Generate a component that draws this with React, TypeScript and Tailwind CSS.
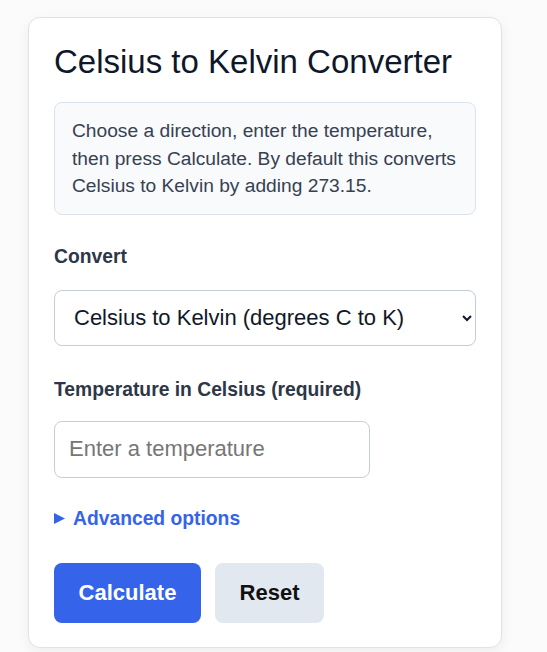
import { useState } from 'react';

export default function App() {
  const [direction, setDirection] = useState('c2k');
  const [value, setValue] = useState('');

  return (
    <div className="min-h-screen bg-[#fbfbfb] px-[28px] pt-[17px] font-['Liberation_Sans',Arial,sans-serif]">
      <div className="w-[474px] rounded-[12px] border border-[#dde3ea] bg-white px-[25px] pt-[25px] pb-[24px] shadow-[0_4px_14px_rgba(15,23,42,0.06)]">
        <h1 className="text-[33px] leading-[38px] text-[#0f172a]">Celsius to Kelvin Converter</h1>

        <div className="mt-[21px] rounded-[8px] border border-[#dde3ea] bg-[#f8fafc] pl-[17px] pr-[10px] py-[14px] text-[19.2px] leading-[27.5px] text-[#374151]">
          Choose a direction, enter the temperature, then press Calculate. By default this converts Celsius to Kelvin by adding 273.15.
        </div>

        <label htmlFor="dir" className="mt-[28px] block text-[19.3px] font-bold leading-[27px] text-[#2d3748]">
          Convert
        </label>
        <select
          id="dir"
          value={direction}
          onChange={(e) => setDirection(e.target.value)}
          className="mt-[20px] block h-[56px] w-full rounded-[8px] border border-[#c4cdd8] bg-white pl-[15px] pr-[10px] text-[22px] text-[#111827]"
        >
          <option value="c2k">Celsius to Kelvin (degrees C to K)</option>
          <option value="k2c">Kelvin to Celsius (K to degrees C)</option>
        </select>

        <label htmlFor="temp" className="mt-[30px] block text-[19.3px] font-bold leading-[27px] text-[#2d3748]">
          Temperature in Celsius (required)
        </label>
        <input
          id="temp"
          type="text"
          value={value}
          onChange={(e) => setValue(e.target.value)}
          placeholder="Enter a temperature"
          className="mt-[18px] block h-[57px] w-[316px] rounded-[8px] border border-[#c4cdd8] bg-white px-[14px] text-[22px] text-[#111827] placeholder:text-[#767676]"
        />

        <details className="mt-[27px]">
          <summary className="flex cursor-pointer list-none items-center text-[19.3px] font-bold leading-[27px] text-[#3563e9]">
            <svg width="11" height="11" viewBox="0 0 11 11" className="mr-[8px] shrink-0" fill="currentColor">
              <path d="M0 0 L11 5.5 L0 11 Z" />
            </svg>
            Advanced options
          </summary>
        </details>

        <div className="mt-[31px] flex gap-[14px]">
          <button className="h-[60px] w-[147px] rounded-[8px] bg-[#3563e9] text-[22px] font-bold text-white">Calculate</button>
          <button className="h-[60px] w-[109px] rounded-[8px] bg-[#e2e8f0] text-[22px] font-bold text-[#111111]">Reset</button>
        </div>
      </div>
    </div>
  );
}
